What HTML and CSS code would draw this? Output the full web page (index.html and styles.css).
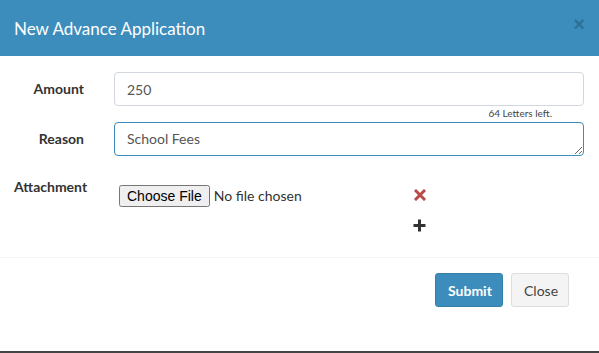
FILE: index.html
```html
<!DOCTYPE html>
<html>
<head>
    <title>New Advance Application</title>
    <link rel="stylesheet" href="styles.css">
</head>
<body>
    <div class="modal">
        <div class="modal-header">
            <h4>New Advance Application</h4>
            <button class="close" type="button">&times;</button>
        </div>

        <div class="modal-body">
            <div class="form-row">
                <label class="control-label">Amount</label>
                <div class="field">
                    <input class="form-control" type="text" value="250">
                    <div class="hint">64 Letters left.</div>
                </div>
            </div>

            <div class="form-row">
                <label class="control-label">Reason</label>
                <div class="field">
                    <textarea class="form-control focused" rows="1">School Fees</textarea>
                </div>
            </div>

            <div class="attach-row">
                <label class="attach-label">Attachment</label>
                <div class="attach-file">
                    <input type="file">
                </div>
                <div class="attach-icons">
                    <svg class="icon-remove" width="12" height="12" viewBox="0 0 12 12">
                        <path d="M2 2 L10 10 M10 2 L2 10" stroke="#b94a48" stroke-width="3" stroke-linecap="square"/>
                    </svg>
                    <svg class="icon-add" width="13" height="13" viewBox="0 0 13 13">
                        <path d="M6.5 0.5 V12.5 M0.5 6.5 H12.5" stroke="#333" stroke-width="3"/>
                    </svg>
                </div>
            </div>
        </div>

        <div class="modal-footer">
            <button class="btn btn-primary">Submit</button>
            <button class="btn btn-default">Close</button>
        </div>
    </div>
</body>
</html>
```

FILE: styles.css
```css
html, body {
    margin: 0;
    padding: 0;
}
body {
    font-family: Lato, "Liberation Sans", sans-serif;
    font-size: 14px;
    color: #333;
    background: #fff;
}
.modal {
    width: 599px;
    height: 351px;
    border-bottom: 2px solid #444;
    background: #fff;
}
.modal-header {
    background: #3c8dbc;
    height: 56px;
    display: flex;
    align-items: center;
    justify-content: space-between;
    padding: 0 14px;
    box-sizing: border-box;
}
.modal-header h4 {
    margin: 0;
    color: #fff;
    font-weight: normal;
    font-size: 17px;
    padding-top: 1px;
}
.close {
    background: none;
    border: none;
    padding: 0;
    margin-top: -8px;
    font-size: 20px;
    font-weight: bold;
    color: #000;
    opacity: 0.2;
    line-height: 1;
    cursor: pointer;
}
.modal-body {
    padding: 16px 15px 0 0;
    border-bottom: 1px solid #f4f4f4;
}
.form-row {
    display: grid;
    grid-template-columns: 99px 1fr;
}
.control-label {
    font-weight: bold;
    text-align: right;
    padding-right: 15px;
    line-height: 34px;
}
.field {
    padding-left: 15px;
}
.form-control {
    display: block;
    width: 100%;
    height: 34px;
    box-sizing: border-box;
    padding: 6px 12px;
    font-family: Lato, "Liberation Sans", sans-serif;
    font-size: 14px;
    color: #555;
    border: 1px solid #d2d6de;
    border-radius: 4px;
    background: #fff;
    outline: none;
}
textarea.form-control {
    resize: vertical;
    line-height: 20px;
    overflow: hidden;
}
.form-control.focused {
    border-color: #3c8dbc;
}
.hint {
    text-align: right;
    font-size: 10px;
    color: #444;
    height: 16px;
    line-height: 15px;
    padding-right: 32px;
}
.attach-row {
    display: grid;
    grid-template-columns: 114px 295px 1fr;
    margin-top: 24px;
    height: 77px;
    box-sizing: border-box;
}
.attach-label {
    font-weight: bold;
    padding-left: 14px;
    line-height: 14px;
}
.attach-file {
    padding-left: 5px;
    padding-top: 5px;
}
.attach-file input {
    font-family: Lato, "Liberation Sans", sans-serif;
    font-size: 14px;
    color: #333;
}
.attach-file input::file-selector-button {
    font-family: "Liberation Sans", Arial, sans-serif;
    font-size: 14px;
}
.attach-icons {
    display: flex;
    flex-direction: column;
    align-items: flex-start;
    gap: 18px;
    padding-top: 9px;
    padding-left: 5px;
}
.icon-add {
    margin-left: -1px;
}
.modal-footer {
    display: flex;
    justify-content: flex-end;
    gap: 8px;
    padding: 15px 30px 0 0;
}
.btn {
    height: 34px;
    padding: 6px 12px;
    font-family: Lato, "Liberation Sans", sans-serif;
    font-size: 14px;
    border-radius: 3px;
    border: 1px solid transparent;
    cursor: pointer;
}
.btn-primary {
    background: #3c8dbc;
    border-color: #367fa9;
    color: #fff;
    font-weight: bold;
    width: 68px;
}
.btn-default {
    background: #f4f4f4;
    border-color: #ddd;
    color: #444;
    width: 58px;
}
```
